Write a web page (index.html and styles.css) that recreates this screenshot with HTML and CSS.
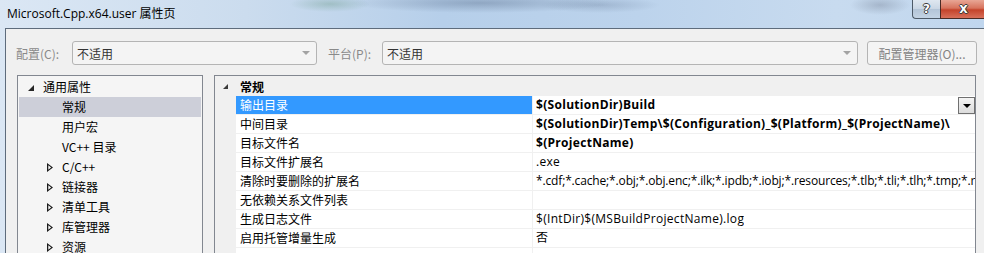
FILE: index.html
```html
<!DOCTYPE html>
<html lang="zh-CN">
<head>
  <meta charset="UTF-8">
  <title>Microsoft.Cpp.x64.user 属性页</title>
  <link rel="stylesheet" href="styles.css">
</head>
<body>
  <div class="window">
    <div class="titlebar">
      <span class="title">Microsoft.Cpp.x64.user 属性页</span>
      <div class="caption-btns">
        <span class="cap-btn help">?</span>
        <span class="cap-btn close">X</span>
      </div>
    </div>

    <div class="frame">
      <div class="client">
        <div class="toolbar">
          <label class="tb-label">配置(C):</label>
          <div class="combo combo-config"><span>不适用</span><i class="combo-arrow"></i></div>
          <label class="tb-label tb-platform">平台(P):</label>
          <div class="combo combo-platform"><span>不适用</span><i class="combo-arrow"></i></div>
          <button class="btn">配置管理器(O)...</button>
        </div>

        <div class="panes">
          <ul class="tree">
            <li class="node l0"><i class="exp exp-open"></i>通用属性</li>
            <li class="node l1 selected"><i class="exp"></i>常规</li>
            <li class="node l1"><i class="exp"></i>用户宏</li>
            <li class="node l1"><i class="exp"></i>VC++ 目录</li>
            <li class="node l1"><i class="exp exp-closed"></i>C/C++</li>
            <li class="node l1"><i class="exp exp-closed"></i>链接器</li>
            <li class="node l1"><i class="exp exp-closed"></i>清单工具</li>
            <li class="node l1"><i class="exp exp-closed"></i>库管理器</li>
            <li class="node l1"><i class="exp exp-closed"></i>资源</li>
          </ul>

          <div class="grid">
            <div class="category">
              <span class="gutter"><i class="cat-tri"></i></span>
              <span class="cat-name">常规</span>
            </div>
            <div class="prop active">
              <span class="gutter"></span>
              <span class="prop-name">输出目录</span>
              <span class="prop-value bold"><span class="val-text">$(SolutionDir)Build</span><i class="drop-btn"></i></span>
            </div>
            <div class="prop">
              <span class="gutter"></span>
              <span class="prop-name">中间目录</span>
              <span class="prop-value bold"><span class="val-text">$(SolutionDir)Temp\$(Configuration)_$(Platform)_$(ProjectName)\</span></span>
            </div>
            <div class="prop">
              <span class="gutter"></span>
              <span class="prop-name">目标文件名</span>
              <span class="prop-value bold"><span class="val-text">$(ProjectName)</span></span>
            </div>
            <div class="prop">
              <span class="gutter"></span>
              <span class="prop-name">目标文件扩展名</span>
              <span class="prop-value"><span class="val-text">.exe</span></span>
            </div>
            <div class="prop">
              <span class="gutter"></span>
              <span class="prop-name">清除时要删除的扩展名</span>
              <span class="prop-value tight"><span class="val-text">*.cdf;*.cache;*.obj;*.obj.enc;*.ilk;*.ipdb;*.iobj;*.resources;*.tlb;*.tli;*.tlh;*.tmp;*.rsp</span></span>
            </div>
            <div class="prop">
              <span class="gutter"></span>
              <span class="prop-name">无依赖关系文件列表</span>
              <span class="prop-value"></span>
            </div>
            <div class="prop">
              <span class="gutter"></span>
              <span class="prop-name">生成日志文件</span>
              <span class="prop-value"><span class="val-text">$(IntDir)$(MSBuildProjectName).log</span></span>
            </div>
            <div class="prop">
              <span class="gutter"></span>
              <span class="prop-name">启用托管增量生成</span>
              <span class="prop-value"><span class="val-text">否</span></span>
            </div>
            <div class="prop">
              <span class="gutter"></span>
              <span class="prop-name"></span>
              <span class="prop-value"></span>
            </div>
          </div>
        </div>
      </div>
    </div>
  </div>
</body>
</html>
```

FILE: styles.css
```css
* {
  margin: 0;
  padding: 0;
  box-sizing: border-box;
}

/* colours of the Win7 dialog */
:root {
  --client-bg: #f0f0f0;
  --frame-line: #5e6c7c;
  --panel-border: #828790;
  --grid-line: #f0f0f0;
  --select-blue: #3399ff;
  --tree-select: #cdcfd9;
  --disabled-text: #8a8a8a;
}

html,
body {
  width: 984px;
  height: 253px;
  overflow: hidden;
}

body {
  font-family: "Open Sans", "Noto Sans CJK SC", sans-serif;
  font-size: 12px;
  color: #000;
  background: var(--client-bg);
}

.window {
  height: 253px;
  display: flex;
  flex-direction: column;
  overflow: hidden;
  background:
    radial-gradient(ellipse 130px 10px at 480px 3px, rgba(70, 90, 120, 0.35), transparent),
    radial-gradient(ellipse 40px 8px at 330px 4px, rgba(60, 120, 80, 0.25), transparent),
    radial-gradient(ellipse 60px 8px at 600px 5px, rgba(80, 100, 130, 0.25), transparent),
    radial-gradient(ellipse 30px 10px at 880px 5px, rgba(90, 100, 120, 0.3), transparent),
    linear-gradient(90deg, #dbe7f4 0%, #cbdcee 25%, #b6cfea 45%, #bcd3ec 65%, #c8dbef 85%, #c0d6ee 100%);
}

/* ---- title bar ---- */
.titlebar {
  flex: none;
  height: 28px;
  display: flex;
  justify-content: space-between;
  align-items: flex-start;
}

.title {
  padding: 5px 0 0 7px;
  line-height: 18px;
  font-size: 12px;
  color: #000;
}

.caption-btns {
  display: flex;
  margin-right: -3px;
}

.cap-btn {
  height: 19px;
  display: flex;
  align-items: center;
  justify-content: center;
  color: #fff;
  font-family: "DejaVu Sans", sans-serif;
  font-weight: bold;
  text-shadow: 1px 0 #3a3a3a, -1px 0 #3a3a3a, 0 1px #3a3a3a, 0 -1px #3a3a3a;
  border: 1px solid #4d5a68;
  border-top: none;
}

.help {
  width: 28px;
  font-size: 12px;
  border-bottom-left-radius: 4px;
  border-right: none;
  background: linear-gradient(#dfe7f0, #c9d6e4 50%, #b3c4d7 51%, #c3d3e4);
}

.close {
  width: 47px;
  font-size: 11px;
  border-color: #4a2a24;
  background: linear-gradient(#e8a695, #d7735d 45%, #c4432b 55%, #d8705a);
}

/* ---- frame and client area ---- */
.frame {
  flex: 1;
  min-height: 0;
  display: flex;
  padding-left: 5px;
}

.client {
  flex: 1;
  display: flex;
  flex-direction: column;
  background: var(--client-bg);
  border-top: 1px solid var(--frame-line);
  border-left: 1px solid var(--frame-line);
  padding: 12px 0 0 10px;
  font-family: "Noto Sans CJK SC", "Open Sans", sans-serif;
}

.toolbar {
  flex: none;
  display: flex;
  align-items: center;
  height: 24px;
}

.tb-label {
  width: 56px;
  color: var(--disabled-text);
}

.tb-platform {
  width: 54px;
  margin-left: 11px;
}

.combo {
  height: 24px;
  display: flex;
  align-items: center;
  justify-content: space-between;
  padding: 0 6px 0 4px;
  background: #f4f4f4;
  border: 1px solid #b4b4b4;
  border-radius: 3px;
  color: #333;
}

.combo-config {
  width: 245px;
}

.combo-platform {
  width: 476px;
}

.combo-arrow {
  width: 0;
  height: 0;
  border-left: 4px solid transparent;
  border-right: 4px solid transparent;
  border-top: 4px solid #a3a3a3;
}

.btn {
  width: 110px;
  height: 24px;
  margin-left: 9px;
  font-family: inherit;
  font-size: 12px;
  color: #838383;
  background: #f4f4f4;
  border: 1px solid #b4b4b4;
  border-radius: 3px;
}

.panes {
  flex: 1;
  min-height: 0;
  display: flex;
  margin-top: 10px;
  margin-left: 1px;
  gap: 11px;
}

/* ---- tree ---- */
.tree {
  flex: none;
  list-style: none;
  width: 186px;
  border: 1px solid var(--panel-border);
  border-bottom: none;
  background: #f5f5f5;
  padding: 1px 1px 0 1px;
  overflow: hidden;
}

.node {
  height: 20px;
  line-height: 20px;
  display: flex;
  align-items: center;
}

.l0 {
  padding-left: 9px;
}

.l1 {
  padding-left: 28px;
}

.node.selected {
  background: var(--tree-select);
}

.exp {
  width: 15px;
  height: 20px;
  display: flex;
  align-items: center;
}

.exp-open::before {
  content: "";
  width: 0;
  height: 0;
  border-left: 6px solid transparent;
  border-bottom: 6px solid #262626;
  margin-top: 1px;
}

.exp-closed::before {
  content: "";
  width: 6px;
  height: 9px;
  background: #1c1c1c;
  clip-path: polygon(0 0, 100% 50%, 0 100%, 0 0, 1.3px 2.2px, 1.3px 6.8px, 4.1px 4.5px, 1.3px 2.2px);
  margin-top: 1px;
}

/* ---- property grid ---- */
.grid {
  flex: none;
  width: 762px;
  border: 1px solid var(--panel-border);
  border-bottom: none;
  background: #fff;
  overflow: hidden;
}

.category {
  height: 20px;
  display: flex;
  align-items: center;
  background: var(--grid-line);
}

.gutter {
  width: 21px;
  flex: none;
  align-self: stretch;
  background: var(--grid-line);
  display: flex;
  align-items: center;
}

.cat-tri {
  width: 0;
  height: 0;
  margin-left: 8px;
  border-left: 5px solid transparent;
  border-bottom: 5px solid #3a3a3a;
}

.cat-name {
  padding-left: 4px;
  font-weight: bold;
}

.prop {
  height: 19px;
  display: flex;
}

.prop-name {
  width: 297px;
  flex: none;
  padding-left: 4px;
  line-height: 18px;
  border-right: 1px solid var(--grid-line);
  border-bottom: 1px solid var(--grid-line);
  white-space: nowrap;
}

.prop-value {
  flex: 1;
  min-width: 0;
  display: flex;
  align-items: flex-start;
  padding-left: 3px;
  line-height: 18px;
  border-bottom: 1px solid var(--grid-line);
  white-space: nowrap;
  overflow: hidden;
  font-family: "Open Sans", "Noto Sans CJK SC", sans-serif;
  font-size: 12px;
  letter-spacing: 0.3px;
}

.prop-value.tight {
  letter-spacing: -0.15px;
}

.val-text {
  min-width: 0;
  overflow: hidden;
}

.prop-value.bold {
  font-weight: bold;
  letter-spacing: 0.3px;
}

.prop.active .prop-name {
  background: var(--select-blue);
  color: #fff;
}

.drop-btn {
  width: 17px;
  height: 17px;
  margin-left: auto;
  margin-top: 1px;
  flex: none;
  display: flex;
  align-items: center;
  justify-content: center;
  border: 1px solid #707070;
  background: linear-gradient(#f4f4f4, #dcdcdc);
}

.drop-btn::before {
  content: "";
  width: 0;
  height: 0;
  border-left: 4px solid transparent;
  border-right: 4px solid transparent;
  border-top: 4px solid #000;
}
```
